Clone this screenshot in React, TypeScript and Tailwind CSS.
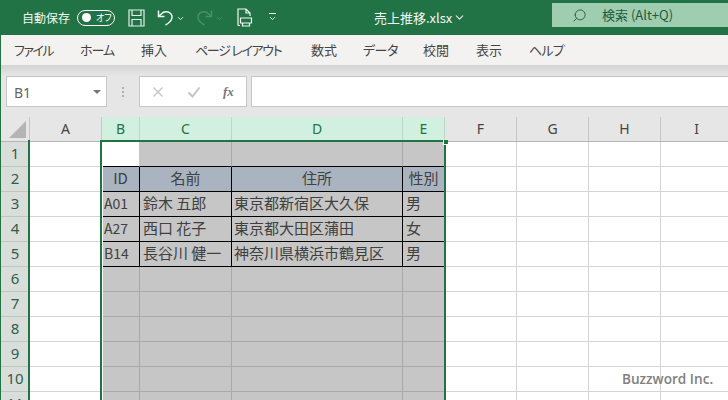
import { ChevronDown, Search } from "lucide-react";

const JP = "[font-family:'Noto_Sans_CJK_JP','Noto_Sans',sans-serif] [font-feature-settings:'palt']";
const CELL = "[font-feature-settings:normal] text-[15px] text-[#404040] whitespace-nowrap pb-[2px]";

const tabs = [
  { label: "ファイル", w: "w-[38px]", gap: "mr-[28px]", track: "tracking-[-1.5px]" },
  { label: "ホーム", w: "w-[34px]", gap: "mr-[27px]", track: "tracking-[-1px]" },
  { label: "挿入", w: "w-[26px]", gap: "mr-[28px]", track: "" },
  { label: "ページ レイアウト", w: "w-[87px]", gap: "mr-[29px]", track: "tracking-[-1.3px]" },
  { label: "数式", w: "w-[26px]", gap: "mr-[26px]", track: "" },
  { label: "データ", w: "w-[33px]", gap: "mr-[27px]", track: "tracking-[-0.5px]" },
  { label: "校閲", w: "w-[26px]", gap: "mr-[27px]", track: "" },
  { label: "表示", w: "w-[26px]", gap: "mr-[27px]", track: "" },
  { label: "ヘルプ", w: "w-[32px]", gap: "", track: "tracking-[-0.8px]" },
];

const columns = [
  { name: "A", w: "w-[72px]", sel: false },
  { name: "B", w: "w-[38px]", sel: true },
  { name: "C", w: "w-[92px]", sel: true },
  { name: "D", w: "w-[171px]", sel: true },
  { name: "E", w: "w-[42px]", sel: true },
  { name: "F", w: "w-[72px]", sel: false },
  { name: "G", w: "w-[72px]", sel: false },
  { name: "H", w: "w-[72px]", sel: false },
  { name: "I", w: "w-[72px]", sel: false },
];

const people = [
  ["A01", "鈴木 五郎", "東京都新宿区大久保", "男"],
  ["A27", "西口 花子", "東京都大田区蒲田", "女"],
  ["B14", "長谷川 健一", "神奈川県横浜市鶴見区", "男"],
];

function SaveIcon() {
  return (
    <svg width="17" height="18" viewBox="0 0 17 18" fill="none" stroke="#e4efe9" strokeWidth="1.2">
      <path d="M1 1h15v16H1z" />
      <path d="M4 1v5.500h9V1M4 17v-6.500h9V17" />
    </svg>
  );
}

function UndoIcon({ color }: { color: string }) {
  return (
    <svg width="17" height="17" viewBox="0 0 17 17" fill="none" stroke={color} strokeWidth="1.5">
      <path d="M1.500 1.500v6h6" />
      <path d="M1.500 7.500 6 3.500c3-1.800 8-.6 9 3.500.6 3-1 6-6.500 9" />
    </svg>
  );
}

function PrintIcon() {
  return (
    <svg width="16" height="19" viewBox="0 0 16 19" fill="none" stroke="#f2f7f4" strokeWidth="1.2">
      <path d="M1 17.500V1h8l4 4v3M9 1v4h4" />
      <path d="M1 17.500h2" />
      <path d="M3.500 10h11v5h-11zM5.500 15v3h7v-3" />
    </svg>
  );
}

function HeaderCell({ name, w, sel }: { name: string; w: string; sel: boolean }) {
  return (
    <div
      className={`${w} shrink-0 flex items-center justify-center border-r pb-[2px] text-[14px] [font-family:'Noto_Sans',sans-serif] ${
        sel ? "bg-[#d2f0e0] border-[#b9d9c8] text-[#217346]" : "bg-[#e6e6e6] border-[#c6c6c6] text-[#444444]"
      }`}
    >
      {name}
    </div>
  );
}

function PlainCells({ from }: { from: number }) {
  return (
    <>
      {columns.slice(from).map((c) => (
        <div key={c.name} className={`${c.w} shrink-0 border-r border-b border-[#d4d4d4] bg-white`} />
      ))}
    </>
  );
}

function Row({ n, children }: { n: number; children: React.ReactNode }) {
  return (
    <div className="flex h-[25px] shrink-0">
      <div className="w-[29px] shrink-0 flex items-center justify-center bg-[#d9dedb] border-r border-b border-[#bfc7c2] pb-[2px] text-[15px] text-[#2f5f49] [font-family:'Noto_Sans',sans-serif]">
        {n}
      </div>
      <div className={`${columns[0].w} shrink-0 border-r border-b border-[#d4d4d4] bg-white`} />
      {children}
      <PlainCells from={5} />
    </div>
  );
}

function GrayCells() {
  return (
    <>
      <div className="w-[38px] shrink-0 border-r border-b border-[#a9a9a9] bg-[#c6c6c6]" />
      <div className="w-[92px] shrink-0 border-r border-b border-[#a9a9a9] bg-[#c6c6c6]" />
      <div className="w-[171px] shrink-0 border-r border-b border-[#a9a9a9] bg-[#c6c6c6]" />
      <div className="w-[42px] shrink-0 border-r border-b border-[#a9a9a9] bg-[#c6c6c6]" />
    </>
  );
}

export default function App() {
  return (
    <div className={`relative w-[728px] h-[400px] overflow-hidden bg-[#e6e6e6] flex flex-col ${JP}`}>
      {/* title bar */}
      <div className="h-[35px] shrink-0 bg-[#217346] flex items-center text-white">
        <span className="ml-[22px] w-[48px] whitespace-nowrap text-[12px] text-[#f2f7f4]">自動保存</span>
        <div className="ml-[7px] w-[38px] h-[16px] rounded-full border border-white flex items-center">
          <span className="ml-[4px] w-[9px] h-[9px] rounded-full bg-white" />
          <span className="ml-[5px] text-[9px] leading-none">オフ</span>
        </div>
        <div className="ml-[13px]"><SaveIcon /></div>
        <div className="ml-[12px]"><UndoIcon color="#f2f7f4" /></div>
        <ChevronDown className="ml-[2px] mt-[1px] text-[#e4efe9]" size={9} strokeWidth={2.5} />
        <div className="ml-[11px] [transform:scaleX(-1)]"><UndoIcon color="#4b8d6c" /></div>
        <ChevronDown className="ml-[2px] mt-[1px] text-[#4b8d6c]" size={9} strokeWidth={2.5} />
        <div className="ml-[13px]"><PrintIcon /></div>
        <div className="ml-[15px] w-[9px] flex flex-col items-center gap-[2px]">
          <span className="w-[7px] h-px bg-[#e4efe9]" />
          <ChevronDown className="-mt-[2px] text-[#e4efe9]" size={9} strokeWidth={2.5} />
        </div>
        <span className="ml-[97px] w-[76px] whitespace-nowrap text-[13px] text-[#f2f7f4]">売上推移.xlsx</span>
        <ChevronDown className="ml-[3px] text-[#e4efe9]" size={13} strokeWidth={2} />
        <div className="ml-[86px] w-[176px] h-[24px] -mt-[5px] bg-[#9fcdb0] flex items-center text-[#1f5a3c]">
          <Search className="ml-[20px] [transform:scaleX(-1)]" size={15} strokeWidth={1.4} />
          <span className="ml-[15px] whitespace-nowrap text-[13px]">検索 (Alt+Q)</span>
        </div>
      </div>

      {/* ribbon tabs */}
      <div className="h-[30px] shrink-0 bg-[#f3f2f1] border-l border-[#217346] flex items-center pl-[13px] text-[13px] text-[#444444]">
        {tabs.map((t) => (
          <span key={t.label} className={`${t.w} ${t.gap} ${t.track} shrink-0 whitespace-nowrap`}>
            {t.label}
          </span>
        ))}
      </div>

      <div className="h-[11px] shrink-0 bg-gradient-to-b from-[#d4d4d4] to-[#e6e6e6] border-l border-[#217346]" />

      {/* formula bar */}
      <div className="h-[31px] shrink-0 flex border-l border-[#217346]">
        <div className="ml-[5px] w-[101px] flex items-center bg-white border border-[#c6c6c6] text-[14px] text-[#666666] [font-family:'Noto_Sans',sans-serif]">
          <span className="ml-[7px] mt-[2px]">B1</span>
          <span className="ml-auto mr-[5px] w-0 h-0 border-x-[4px] border-x-transparent border-t-[4px] border-t-[#777777]" />
        </div>
        <div className="w-[32px] flex items-center justify-center">
          <span className="flex flex-col gap-[2px]">
            <span className="w-[2px] h-[2px] bg-[#b0b0b0]" />
            <span className="w-[2px] h-[2px] bg-[#b0b0b0]" />
            <span className="w-[2px] h-[2px] bg-[#b0b0b0]" />
          </span>
        </div>
        <div className="w-[108px] flex items-center bg-white border border-[#c6c6c6] text-[#c0c0c0]">
          <svg className="ml-[12px]" width="12" height="12" viewBox="0 0 12 12" stroke="#c4c4c4" strokeWidth="1.4" fill="none">
            <path d="M1.500 1.500l9 9M10.500 1.500l-9 9" />
          </svg>
          <svg className="ml-[23px]" width="14" height="12" viewBox="0 0 14 12" stroke="#c4c4c4" strokeWidth="2" fill="none">
            <path d="M1.500 6.500l4 4 7-9" />
          </svg>
          <span className="ml-[22px] text-[13px] italic font-bold text-[#777777] [font-family:'Liberation_Serif',serif]">fx</span>
        </div>
        <div className="ml-[4px] flex-1 bg-white border-y border-l border-[#c6c6c6]" />
      </div>

      <div className="h-[10px] shrink-0 border-l border-[#217346]" />

      {/* sheet */}
      <div className="relative flex-1 min-h-0 flex flex-col overflow-hidden border-l border-[#217346] -mb-[20px]">
        <div className="flex h-[25px] shrink-0 border-b border-[#b5b5b5]">
          <div className="w-[29px] shrink-0 bg-[#e6e6e6] border-r border-[#c6c6c6] flex items-end justify-end pr-[3px] pb-[3px]">
            <span className="w-0 h-0 border-l-[17px] border-l-transparent border-b-[17px] border-b-[#b4b4b4]" />
          </div>
          {columns.map((c) => (
            <HeaderCell key={c.name} {...c} />
          ))}
        </div>

        <Row n={1}>
          <div className="w-[38px] shrink-0 border-r border-b border-b-black border-r-[#c6c6c6] bg-white" />
          <div className="w-[92px] shrink-0 border-r border-b border-r-[#a9a9a9] border-b-black bg-[#c6c6c6]" />
          <div className="w-[171px] shrink-0 border-r border-b border-r-[#a9a9a9] border-b-black bg-[#c6c6c6]" />
          <div className="w-[42px] shrink-0 border-r border-b border-r-[#a9a9a9] border-b-black bg-[#c6c6c6]" />
        </Row>
        <Row n={2}>
          <div className={`w-[38px] shrink-0 flex items-center justify-center border-r border-b border-black bg-[#a9b4c0] ${CELL}`}>ID</div>
          <div className={`w-[92px] shrink-0 flex items-center justify-center border-r border-b border-black bg-[#a9b4c0] ${CELL}`}>名前</div>
          <div className={`w-[171px] shrink-0 flex items-center justify-center border-r border-b border-black bg-[#a9b4c0] ${CELL}`}>住所</div>
          <div className={`w-[42px] shrink-0 flex items-center justify-center border-r border-b border-b-black border-r-[#a9a9a9] bg-[#a9b4c0] ${CELL}`}>性別</div>
        </Row>
        {people.map((p, i) => (
          <Row key={p[0]} n={i + 3}>
            <div className={`w-[38px] shrink-0 flex items-center pl-[2px] border-r border-b border-black bg-[#c6c6c6] ${CELL}`}><span className="text-[14px]">{p[0]}</span></div>
            <div className={`w-[92px] shrink-0 flex items-center pl-[3px] border-r border-b border-black bg-[#c6c6c6] ${CELL}`}>{p[1]}</div>
            <div className={`w-[171px] shrink-0 flex items-center pl-[2px] border-r border-b border-black bg-[#c6c6c6] ${CELL}`}>{p[2]}</div>
            <div className={`w-[42px] shrink-0 flex items-center pl-[3px] border-r border-b border-b-black border-r-[#a9a9a9] bg-[#c6c6c6] ${CELL}`}>{p[3]}</div>
          </Row>
        ))}
        {[6, 7, 8, 9, 10, 11].map((n) => (
          <Row key={n} n={n}>
            <GrayCells />
          </Row>
        ))}

        {/* selection outlines */}
        <div className="absolute left-[27px] top-[23px] bottom-0 w-[2px] bg-[#217346]" />
        <div className="absolute left-[99px] top-[23px] bottom-0 w-[2px] bg-[#217346]" />
        <div className="absolute left-[101px] top-[25px] bottom-0 w-[1px] bg-white" />
        <div className="absolute left-[99px] top-[23px] w-[345px] h-[2px] bg-[#217346]" />
        <div className="absolute left-[443px] top-[23px] bottom-0 w-[2px] bg-[#217346]" />
        <div className="absolute left-[442px] top-[23px] w-[5px] h-[5px] bg-[#217346] border-l border-b border-white" />
      </div>

      <span className="absolute left-[622px] top-[369px] text-[13.6px] font-semibold text-[#808080] [font-family:'Open_Sans',sans-serif]">
        Buzzword Inc.
      </span>
    </div>
  );
}
